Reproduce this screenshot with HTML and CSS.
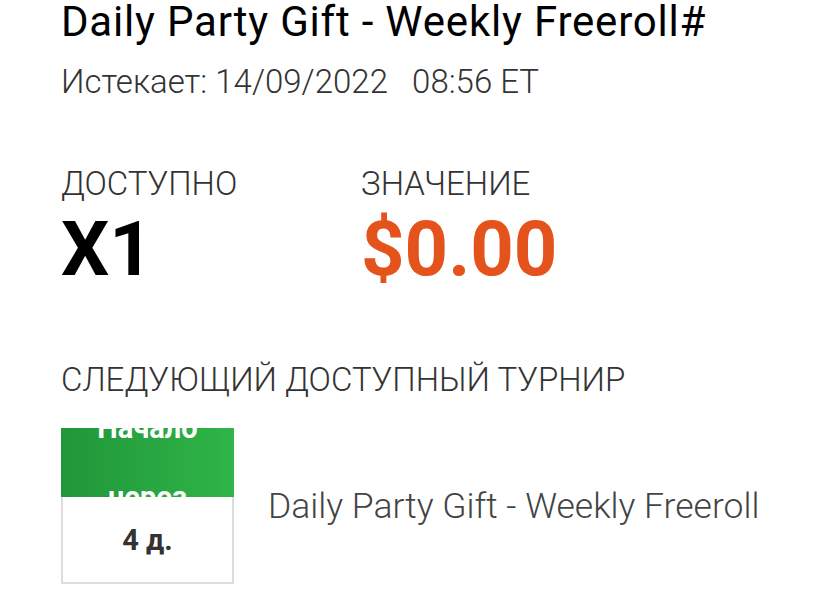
FILE: index.html
```html
<!DOCTYPE html>
<html lang="ru">
<head>
    <meta charset="UTF-8">
    <meta name="viewport" content="width=device-width, initial-scale=1.0">
    <title>Daily Party Gift</title>
    <link rel="stylesheet" href="styles.css">
</head>
<body>
    <div class="page">
        <h1 class="title">Daily Party Gift - Weekly Freeroll#</h1>
        <p class="expires">Истекает: 14/09/2022&nbsp;&nbsp;&nbsp;08:56 ET</p>

        <div class="stats">
            <div class="stat">
                <div class="label">ДОСТУПНО</div>
                <div class="value">X1</div>
            </div>
            <div class="stat">
                <div class="label">ЗНАЧЕНИЕ</div>
                <div class="value money">$0.00</div>
            </div>
        </div>

        <div class="label next-label">СЛЕДУЮЩИЙ ДОСТУПНЫЙ ТУРНИР</div>

        <!-- next tournament row -->
        <div class="tourney">
            <div class="timer">
                <div class="timer-head">Начало через</div>
                <div class="timer-body">4 д.</div>
            </div>
            <div class="tourney-name">Daily Party Gift - Weekly Freeroll</div>
        </div>
    </div>
</body>
</html>
```

FILE: styles.css
```css
body {
    margin: 0;
    background-color: #fff;
    font-family: Roboto, "Noto Sans", sans-serif;
    color: #000;
}

.page {
    padding: 0 0 0 61px;
}

.title {
    margin: 0;
    font-size: 42px;
    font-weight: 400;
    letter-spacing: 0.8px;
    line-height: 44px;
}

.expires {
    margin: 18px 0 0;
    font-size: 33px;
    font-weight: 300;
    color: #333;
    line-height: 40px;
}

.stats {
    display: flex;
    margin-top: 62px;
}

.stat {
    width: 300px;
}

.label {
    font-size: 33px;
    font-weight: 300;
    color: #333;
    line-height: 40px;
}

.value {
    font-size: 76px;
    font-weight: 700;
    line-height: 80px;
    margin-top: 5px;
}

.money {
    color: #e4531b;
}

.next-label {
    margin-top: 71px;
}

.tourney {
    display: flex;
    align-items: center;
    margin-top: 28px;
}

.timer {
    width: 173px;
}

.timer-head {
    height: 69px;
    overflow: hidden;
    background: linear-gradient(90deg, #21963a, #2fb548);
    color: #fff;
    font-size: 29px;
    font-weight: 700;
    text-align: center;
    line-height: 69px;
    display: flex;
    flex-direction: column;
    justify-content: center;
}

.timer-body {
    height: 85px;
    border: 2px solid #ddd;
    border-top: none;
    display: flex;
    justify-content: center;
    align-items: center;
    font-size: 29px;
    font-weight: 700;
    color: #333;
}

.tourney-name {
    margin-left: 34px;
    font-size: 35.5px;
    font-weight: 300;
    color: #444;
}
```
